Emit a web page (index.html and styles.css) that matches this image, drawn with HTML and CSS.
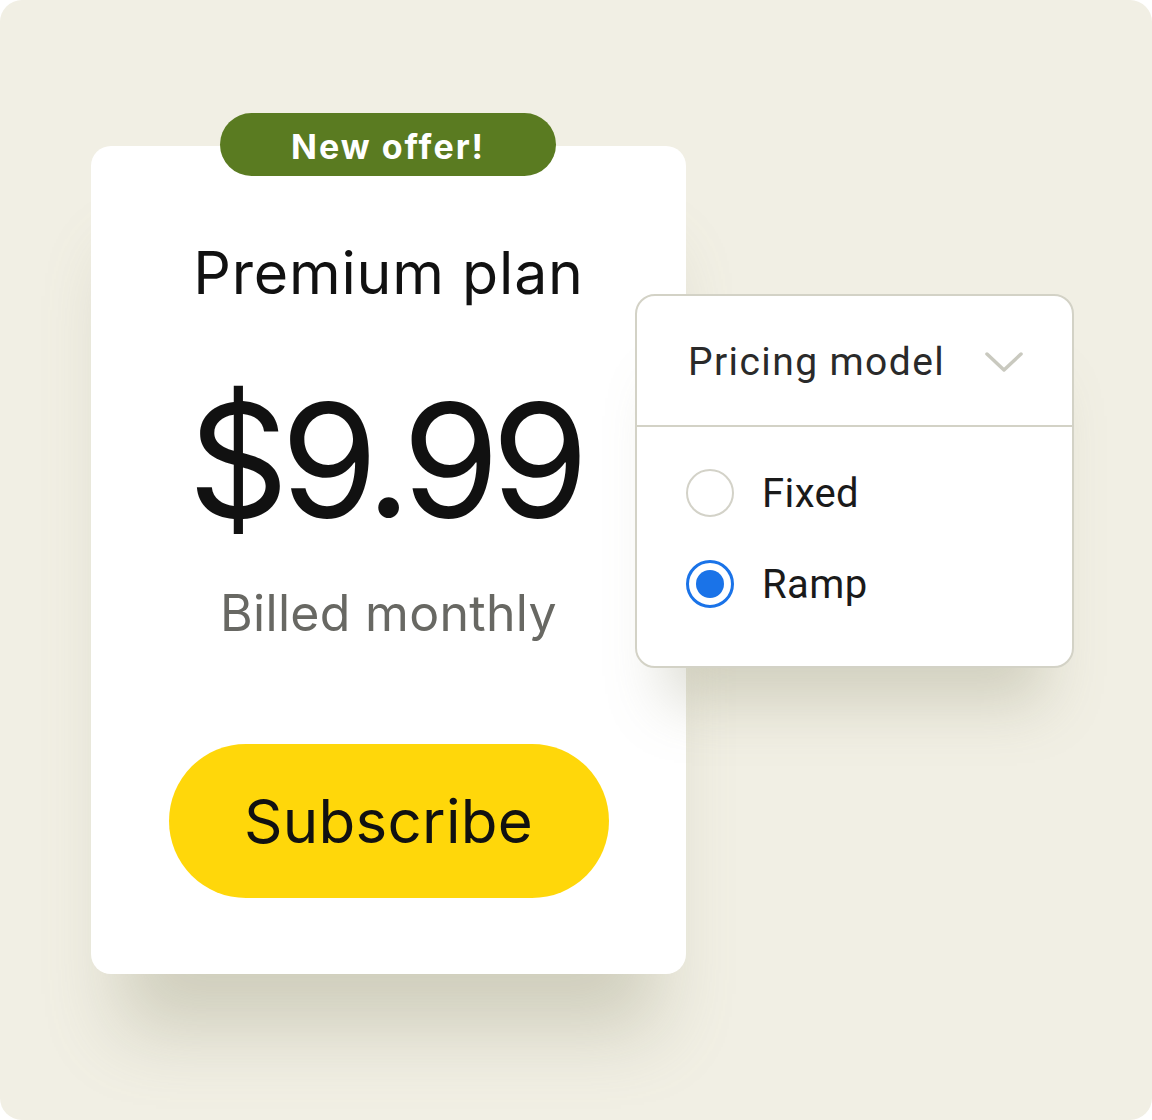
FILE: index.html
```html
<!DOCTYPE html>
<html>
<head>
<meta charset="utf-8">
<link rel="stylesheet" href="styles.css">
</head>
<body>
<div class="canvas">
  <div class="card">
    <div class="badge">New offer!</div>
    <h1 class="plan">Premium plan</h1>
    <div class="price">$9.99</div>
    <div class="billed">Billed monthly</div>
    <button class="subscribe">Subscribe</button>
  </div>
  <div class="panel">
    <div class="panel-head">
      <span class="panel-title">Pricing model</span>
      <svg class="chev" width="40" height="24" viewBox="0 0 40 24"><path d="M3 4 L20 20 L37 4" fill="none" stroke="#c9c9bf" stroke-width="3.5" stroke-linecap="round" stroke-linejoin="round"/></svg>
    </div>
    <div class="options">
      <div class="opt"><span class="radio"></span><span class="opt-label">Fixed</span></div>
      <div class="opt"><span class="radio on"></span><span class="opt-label">Ramp</span></div>
    </div>
  </div>
</div>
</body>
</html>
```

FILE: styles.css
```css
html, body { margin: 0; padding: 0; background: #ffffff; }
.canvas {
  position: relative;
  width: 1152px;
  height: 1120px;
  background: #f1efe4;
  border-radius: 22px;
  box-sizing: border-box;
  padding: 146px 0 0 91px;
  font-family: "Inter", "Liberation Sans", sans-serif;
}
.card {
  position: relative;
  width: 595px;
  height: 828px;
  background: #ffffff;
  border-radius: 20px;
  box-shadow: 0 85px 70px -30px rgba(140, 140, 110, 0.33);
  display: flex;
  flex-direction: column;
  align-items: center;
  box-sizing: border-box;
  padding-top: 92px;
}
.badge {
  position: absolute;
  top: -33px;
  left: 129px;
  width: 336px;
  height: 63px;
  border-radius: 32px;
  background: #5a7b21;
  color: #ffffff;
  font-weight: 700;
  font-size: 34px;
  letter-spacing: 2px;
  padding-top: 3px;
  box-sizing: border-box;
  display: flex;
  align-items: center;
  justify-content: center;
}
.plan {
  margin: 0;
  font-weight: 400;
  font-size: 59px;
  line-height: 70px;
  color: #111111;
  letter-spacing: 0.8px;
}
.price {
  margin-top: 72px;
  font-size: 157px;
  line-height: 160px;
  color: #111111;
  letter-spacing: -8px;
  padding-right: 8px;
}
.billed {
  margin-top: 43px;
  font-size: 50px;
  line-height: 60px;
  color: #686863;
  letter-spacing: 0.3px;
}
.subscribe {
  margin-top: 101px;
  width: 440px;
  height: 154px;
  border: none;
  border-radius: 77px;
  background: #ffd70a;
  color: #111111;
  font-family: inherit;
  font-size: 60px;
  letter-spacing: 0.3px;
  padding: 0;
}
.panel {
  position: absolute;
  left: 635px;
  top: 294px;
  width: 439px;
  height: 374px;
  box-sizing: border-box;
  background: #ffffff;
  border: 2px solid #d3d2c6;
  border-radius: 20px;
  box-shadow: 0 65px 55px -30px rgba(140, 140, 110, 0.3);
  font-family: "Roboto", "Liberation Sans", sans-serif;
}
.panel-head {
  height: 131px;
  border-bottom: 2px solid #d3d2c6;
  display: flex;
  align-items: center;
  justify-content: space-between;
  padding: 2px 48px 0 51px;
  box-sizing: border-box;
}
.panel-title {
  font-size: 39px;
  letter-spacing: 1.4px;
  color: #2a2a2a;
}
.chev { display: block; }
.options {
  padding: 42px 0 0 49px;
  display: flex;
  flex-direction: column;
  gap: 43px;
}
.opt {
  display: flex;
  align-items: center;
  height: 48px;
}
.radio {
  width: 48px;
  height: 48px;
  box-sizing: border-box;
  border: 2.5px solid #d3d2c8;
  border-radius: 50%;
  margin-right: 28px;
  position: relative;
}
.radio.on {
  border: 3px solid #1a73e8;
}
.radio.on::after {
  content: "";
  position: absolute;
  left: 7px;
  top: 7px;
  width: 28px;
  height: 28px;
  border-radius: 50%;
  background: #1a73e8;
}
.opt-label {
  font-size: 40px;
  letter-spacing: 0.4px;
  color: #1a1a1a;
}
```
